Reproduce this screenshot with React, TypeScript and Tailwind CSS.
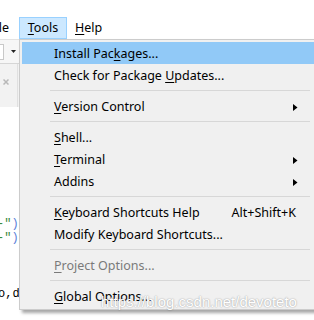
import React from "react";

const FONT = { fontFamily: '"Noto Sans", "Open Sans", sans-serif' };

type Item =
  | { type: "sep" }
  | {
      type: "item";
      label: string;
      u?: number;
      sub?: boolean;
      shortcut?: string;
      active?: boolean;
      disabled?: boolean;
    };

const items: Item[] = [
  { type: "item", label: "Install Packages...", u: 11, active: true },
  { type: "item", label: "Check for Package Updates...", u: 18 },
  { type: "sep" },
  { type: "item", label: "Version Control", u: 0, sub: true },
  { type: "sep" },
  { type: "item", label: "Shell...", u: 0 },
  { type: "item", label: "Terminal", u: 0, sub: true },
  { type: "item", label: "Addins", sub: true },
  { type: "sep" },
  { type: "item", label: "Keyboard Shortcuts Help", u: 0, shortcut: "Alt+Shift+K" },
  { type: "item", label: "Modify Keyboard Shortcuts..." },
  { type: "sep" },
  { type: "item", label: "Project Options...", u: 0, disabled: true },
  { type: "sep" },
  { type: "item", label: "Global Options...", u: 0 },
];

function Label({ text, u }: { text: string; u?: number }) {
  if (u === undefined) return <span>{text}</span>;
  return (
    <span>
      {text.slice(0, u)}
      <span className="underline underline-offset-2 decoration-1">{text[u]}</span>
      {text.slice(u + 1)}
    </span>
  );
}

function Arrow() {
  return (
    <svg width="5" height="7" viewBox="0 0 5 7" className="block">
      <polygon points="0,0 4.5,3.5 0,7" fill="#000" />
    </svg>
  );
}

export default function App() {
  return (
    <div
      className="relative w-[314px] h-[320px] overflow-hidden bg-white text-[12.5px] text-black"
      style={FONT}
    >
      {/* background app */}
      <div className="flex flex-col h-full">
        <div className="h-[17px] bg-white" />
        {/* menu bar */}
        <div className="h-[22px] flex items-stretch bg-white">
          <div className="ml-[-11px] w-[30px] flex items-center pt-[1px]">
            <span>File</span>
          </div>
          <div className="w-[48px] flex items-center justify-center bg-[#cce8ff] border border-[#99d1ff] pt-[1px]">
            <Label text="Tools" u={0} />
          </div>
          <div className="pl-[8px] flex items-center pt-[1px]">
            <Label text="Help" u={0} />
          </div>
        </div>
        {/* toolbar */}
        <div className="h-[24px] bg-[#f6f6f6] border-t border-[#e3e3e3] flex items-center">
          <div className="w-[4px] h-[16px] border border-l-0 border-[#c8c8c8] bg-white" />
          <svg width="5" height="3" viewBox="0 0 5 3" className="ml-[7px]">
            <polygon points="0,0 5,0 2.5,3" fill="#222" />
          </svg>
        </div>
        {/* tab bar */}
        <div className="h-[44px] bg-[#f2f2f2] border-t border-[#d6d6d6] flex">
          <div className="w-[18px] border-r border-[#e0e0e0] pt-[15px] pl-[3px]">
            <svg width="6" height="6" viewBox="0 0 6 6">
              <path d="M0.5 0.5 L5.5 5.5 M5.5 0.5 L0.5 5.5" stroke="#b8b8b8" strokeWidth="1.5" />
            </svg>
          </div>
        </div>
        {/* editor */}
        <div
          className="flex-1 bg-white pt-[110px] text-[12px]"
          style={{ fontFamily: '"Liberation Mono", monospace' }}
        >
          <div className="h-[14px] leading-[14px] ml-[-3px] whitespace-pre">
            <span className="text-[#3a8a3a]">-"</span>
            <span className="text-[#5b7fd8]">)</span>
          </div>
          <div className="h-[14px] leading-[14px] ml-[-3px] whitespace-pre">
            <span className="text-[#3a8a3a]">-"</span>
            <span className="text-[#5b7fd8]">)</span>
          </div>
          <div className="h-[14px]" />
          <div className="h-[14px]" />
          <div className="h-[14px]" />
          <div className="h-[14px] leading-[14px] ml-[-2px] whitespace-pre text-black">
            o,d
          </div>
        </div>
      </div>

      {/* dropdown menu */}
      <div className="absolute left-[19px] top-[39px] w-[300px] bg-[#f0f0f0] border border-[#cccccc] p-[2px] shadow-[3px_3px_3px_rgba(0,0,0,0.35)]">
        {items.map((it, i) =>
          it.type === "sep" ? (
            <div key={i} className="h-[9px] flex items-center pl-[28px] pr-[6px]">
              <div className="h-px w-full bg-[#d7d7d7]" />
            </div>
          ) : (
            <div
              key={i}
              className={
                "h-[22px] flex items-center pl-[32px] pr-[18px] pt-[2px] " +
                (it.active ? "bg-[#91c9f7] " : "") +
                (it.disabled ? "text-[#7a7a7a]" : "text-black")
              }
            >
              <span className="flex-1 whitespace-nowrap">
                <Label text={it.label} u={it.u} />
              </span>
              {it.shortcut && <span className="whitespace-nowrap mr-[2px]">{it.shortcut}</span>}
              {it.sub && <Arrow />}
            </div>
          )
        )}
      </div>

      {/* watermark */}
      <div
        className="absolute left-[101px] top-[294px] text-[15px] leading-[15px] whitespace-nowrap text-white"
        style={{
          fontFamily: '"Liberation Sans", Arial, sans-serif',
          textShadow: "0 0 1.5px rgba(0,0,0,0.45)",
        }}
      >
        https://blog.csdn.net/devoteto
      </div>
    </div>
  );
}
